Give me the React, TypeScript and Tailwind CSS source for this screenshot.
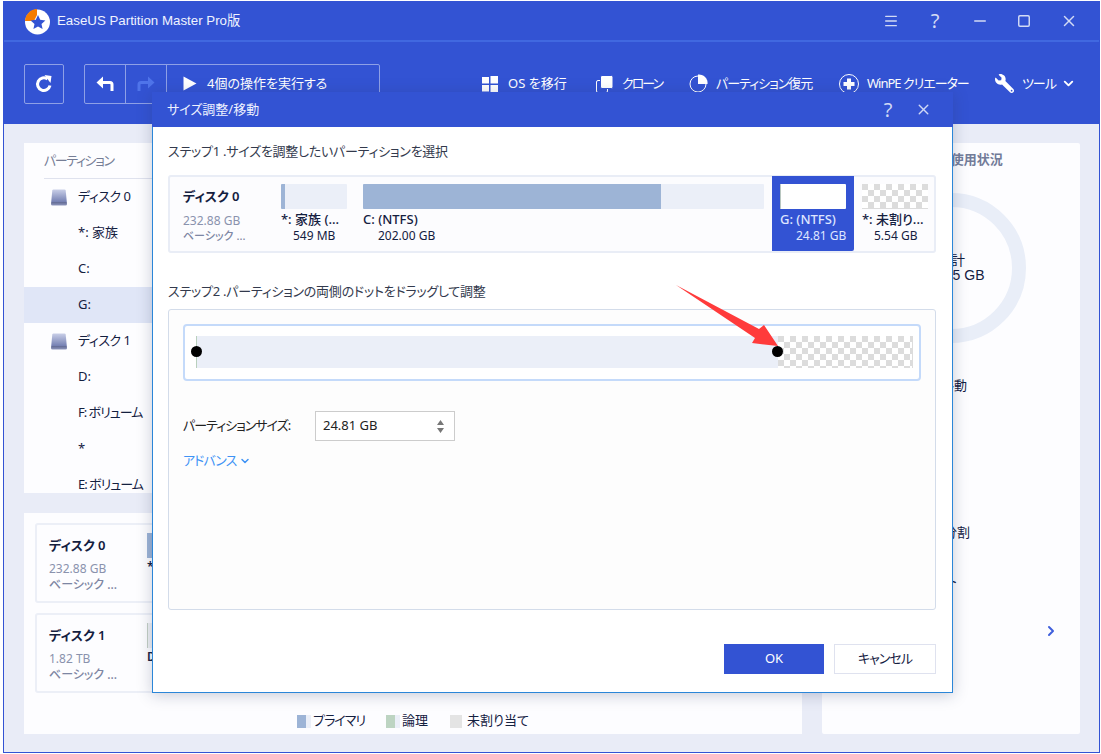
import { FaWrench } from "react-icons/fa";
import { ChevronDown, ChevronRight, Menu, Minus, Square, X } from "lucide-react";

const checks =
  "bg-[repeating-conic-gradient(#dcdcdc_0%_25%,#ffffff_0%_50%)] bg-[length:12px_12px] bg-[position:6px_0]";

const treeRows = [
  { label: "ディスク 0", disk: true, text: "tracking-[-0.5px]" },
  { label: "*: 家族", text: "" },
  { label: "C:", text: "" },
  { label: "G:", active: true, text: "" },
  { label: "ディスク 1", disk: true, text: "tracking-[-0.5px]" },
  { label: "D:", text: "" },
  { label: "F: ボリューム", text: "tracking-[-1px]" },
  { label: "*", text: "" },
  { label: "E: ボリューム", text: "tracking-[-1px]" },
];

const Logo = () => (
  <svg width="27" height="27" viewBox="0 0 27 27">
    <circle cx="13.5" cy="14" r="12.5" fill="#fff" />
    <path d="M1 13 A12.5 12.5 0 0 1 13 1 L13 7 L10 13 Z" fill="#f57c00" />
    <path
      d="M14 7l2.2 4.8 5.2.6-3.9 3.5 1.1 5.1-4.6-2.6-4.6 2.6 1.1-5.1-3.9-3.5 5.2-.6z"
      fill="#3353d3"
    />
  </svg>
);

const DiskIcon = () => (
  <svg width="16" height="17" viewBox="0 0 16 17">
    <defs>
      <linearGradient id="disk" x1="0" y1="0" x2="0" y2="1">
        <stop offset="0" stopColor="#c9cfe8" />
        <stop offset="0.75" stopColor="#7782b4" />
        <stop offset="0.76" stopColor="#5b648f" />
        <stop offset="1" stopColor="#8f97bd" />
      </linearGradient>
    </defs>
    <path
      d="M2.5 0.5h11q1 0 1.2 1L16 15q0 1.5-1.5 1.5h-13Q0 16.500 0 15L1.300 1.500q.2-1 1.200-1z"
      fill="url(#disk)"
    />
  </svg>
);

const ToolItem = ({
  icon,
  label,
  className,
  labelClass = "",
}: {
  icon: any;
  label: string;
  className: string;
  labelClass?: string;
}) => (
  <div className={`flex items-center shrink-0 ${className}`}>
    {icon}
    <span className={`text-[13px] text-white whitespace-nowrap ${labelClass}`}>{label}</span>
  </div>
);

const PartBar = ({
  fill,
  used,
  selected,
}: {
  fill?: string;
  used: string;
  selected?: boolean;
}) => (
  <div className={`h-[25px] flex rounded-[1px] overflow-hidden ${selected ? "bg-white" : "bg-[#ebeff8]"}`}>
    <div className={`${used} ${fill ?? "bg-[#9db4d6]"} h-full`} />
  </div>
);

const App = () => {
  return (
    <div className="relative w-[1101px] h-[754px] bg-white pl-[3px] pt-px pr-px pb-px overflow-hidden font-['Noto_Sans','Noto_Sans_CJK_JP',sans-serif] [font-feature-settings:'palt'] text-[#14203f]">
      <div className="flex flex-col h-[752px] border border-[#3353d3] bg-[#e9ecf7]">
        {/* title bar */}
        <div className="flex items-center h-[40px] shrink-0 bg-[#3353d3] border-b-2 border-[#4168e0] pl-[20px] text-white">
          <Logo />
          <span className="ml-[6px] text-[13.3px] font-['Liberation_Sans','Noto_Sans_CJK_JP',sans-serif] text-[#f0f3ff]">
            EaseUS Partition Master Pro版
          </span>
          <div className="ml-auto flex items-center text-[#d3dbf5]">
            <div className="w-[44px] flex justify-center">
              <Menu size={16} strokeWidth={2} />
            </div>
            <div className="w-[44px] flex justify-center text-[20px] leading-none">?</div>
            <div className="w-[45px] flex justify-center">
              <Minus size={18} strokeWidth={2} />
            </div>
            <div className="w-[44px] flex justify-center">
              <Square size={14} strokeWidth={2.5} />
            </div>
            <div className="w-[45px] flex justify-center mr-[8px]">
              <X size={18} strokeWidth={2} />
            </div>
          </div>
        </div>

        {/* toolbar */}
        <div className="flex items-center h-[82px] shrink-0 bg-[#3353d3] pl-[20px] pt-px">
          <div className="w-[40px] h-[40px] shrink-0 rounded-[2px] border border-[#8ea0e6] flex items-center justify-center">
            <svg width="20" height="20" viewBox="0 0 20 20" fill="none">
              <path d="M16 11.500A6.300 6.300 0 1 1 13.500 5" stroke="#fff" strokeWidth="3" />
              <path d="M10.500 1l7 1-1 7z" fill="#fff" />
            </svg>
          </div>
          <div className="ml-[20px] w-[296px] h-[40px] shrink-0 rounded-[2px] border border-[#8ea0e6] flex items-center">
            <div className="w-[41px] h-full border-r border-[#8ea0e6] flex items-center justify-center">
              <svg width="18" height="18" viewBox="0 0 18 18" fill="none">
                <path d="M16 16V9.500Q16 7.500 14 7.500H5" stroke="#fff" strokeWidth="3" />
                <path d="M7 1.500L0.500 7.500 7 13.500z" fill="#fff" />
              </svg>
            </div>
            <div className="w-[41px] h-full border-r border-[#8ea0e6] flex items-center justify-center">
              <svg width="18" height="18" viewBox="0 0 18 18" fill="none">
                <path d="M2 16V9.500Q2 7.500 4 7.500H13" stroke="#4f74ea" strokeWidth="3" />
                <path d="M11 1.500L17.500 7.500 11 13.500z" fill="#4f74ea" />
              </svg>
            </div>
            <svg className="ml-[16px]" width="14" height="15" viewBox="0 0 14 15">
              <path d="M0.500 0.500L13.500 7.500 0.500 14.500z" fill="#fff" />
            </svg>
            <span className="ml-[10px] text-[13px] text-white whitespace-nowrap">4個の操作を実行する</span>
          </div>

          <ToolItem
            className="ml-[102px] w-[114px]"
            label="OS を移行"
            icon={
              <svg className="mr-[10px]" width="16" height="16" viewBox="0 0 16 16" fill="#fff">
                <path d="M0 1h7v6.500H0zM8.500 0H16v7.500H8.500zM0 9h7v6.500H0zM8.500 9H16v7H8.500z" />
              </svg>
            }
          />
          <ToolItem
            className="w-[93px]"
            label="クローン"
            labelClass="tracking-[-2px]"
            icon={
              <svg className="mr-[9px]" width="17" height="18" viewBox="0 0 17 18" fill="none">
                <rect x="0.500" y="5.500" width="11" height="12" rx="1.500" stroke="#fff" />
                <rect x="4.500" y="0.500" width="12.500" height="13" rx="1.500" fill="#fff" stroke="#3353d3" />
              </svg>
            }
          />
          <ToolItem
            className="w-[150px]"
            label="パーティション復元"
            labelClass="tracking-[-1px]"
            icon={
              <svg className="mr-[8px]" width="19" height="19" viewBox="0 0 19 19" fill="none">
                <circle cx="9" cy="10" r="8" stroke="#fff" />
                <path d="M9 0.500A8.500 8.500 0 0 1 18.500 10H9z" fill="#fff" />
              </svg>
            }
          />
          <ToolItem
            className="w-[156px]"
            label="WinPE クリエーター"
            labelClass="tracking-[-1px]"
            icon={
              <svg className="mr-[8px]" width="20" height="20" viewBox="0 0 20 20" fill="none">
                <circle cx="10" cy="10" r="9.500" stroke="#fff" />
                <path d="M8 4.500h4V8h3.500v4H12v3.500H8V12H4.500V8H8z" fill="#fff" />
              </svg>
            }
          />
          <ToolItem
            className=""
            label="ツール"
            labelClass="tracking-[-1px]"
            icon={<FaWrench className="mr-[8px] text-white -scale-x-100" size={19} />}
          />
          <ChevronDown className="ml-[5px] text-white" size={15} strokeWidth={3} />
        </div>

        {/* main area behind the dialog */}
        <div className="flex flex-1 gap-[20px] pt-[19px] pl-[20px] pr-[19px] pb-[18px] min-h-0">
          <div className="w-[778px] flex flex-col gap-[20px]">
            <div className="h-[350px] bg-[#fdfdff] overflow-hidden pl-[20px]">
              <div className="h-[36px] flex items-center text-[13px] tracking-[-1.4px] text-[#767e96] border-b border-[#dfe2ee]">
                パーティション
              </div>
              <div className="-ml-[20px]">
                {treeRows.map((row) => (
                  <div
                    key={row.label}
                    className={`h-[36px] flex items-center text-[13px] ${row.active ? "bg-[#e0e6f7]" : ""}`}
                  >
                    <div className="w-[27px] ml-[27px] shrink-0">{row.disk && <DiskIcon />}</div>
                    <span className={row.text}>{row.label}</span>
                  </div>
                ))}
              </div>
            </div>

            <div className="flex-1 bg-[#fdfdff] pt-[10px] pl-[11px] pr-[11px] flex flex-col">
              <div className="h-[80px] border-2 border-[#eceff7] rounded-[3px] pl-[12px] flex">
                <div className="w-[98px] pt-[10px]">
                  <div className="text-[13px] font-semibold leading-[20px]">ディスク 0</div>
                  <div className="mt-[6px] text-[12px] leading-[16px] text-[#8a92ad]">232.88 GB</div>
                  <div className="text-[12px] leading-[16px] font-medium text-[#7d86a3]">ベーシック ...</div>
                </div>
                <div className="pt-[8px]">
                  <div className="w-[66px] h-[25px] bg-[#9db4d6]" />
                  <div className="text-[12px] font-semibold">*</div>
                </div>
              </div>
              <div className="mt-[10px] h-[80px] border-2 border-[#eceff7] rounded-[3px] pl-[12px] flex">
                <div className="w-[98px] pt-[10px]">
                  <div className="text-[13px] font-semibold leading-[20px]">ディスク 1</div>
                  <div className="mt-[6px] text-[12px] leading-[16px] text-[#8a92ad]">1.82 TB</div>
                  <div className="text-[12px] leading-[16px] font-medium text-[#7d86a3]">ベーシック ...</div>
                </div>
                <div className="pt-[8px]">
                  <div className="w-[66px] h-[25px] bg-[#eef0f3] border-l border-[#c3cfc3]" />
                  <div className="text-[12px] font-semibold">D</div>
                </div>
              </div>
              <div className="mt-auto h-[40px] -mb-[7px] flex items-center justify-center text-[13px] text-[#14203f]">
                <span className="w-[9px] h-[13px] bg-[#9db4d6]" />
                <span className="w-[5px] h-[13px] bg-[#ebeff8]" />
                <span className="ml-[2px] tracking-[-1px]">プライマリ</span>
                <span className="ml-[21px] w-[9px] h-[13px] bg-[#bdd4c2]" />
                <span className="w-[5px] h-[13px] bg-[#ebeff8]" />
                <span className="ml-[2px]">論理</span>
                <span className="ml-[22px] w-[12px] h-[13px] bg-[#e4e4e4]" />
                <span className="ml-[5px]">未割り当て</span>
              </div>
            </div>
          </div>

          <div className="w-[258px] bg-[#fdfdff] rounded-[2px] overflow-hidden">
            <div className="h-[34px] flex items-center pl-[83px] text-[13px] font-semibold text-[#737c99]">
              ディスク使用状況
            </div>
            <div className="relative mt-[16px] ml-[54px] w-[150px] h-[150px] rounded-full border-[14px] border-[#e9eef8] flex flex-col items-center justify-center text-[#14203f] font-['Liberation_Sans','Noto_Sans_CJK_JP',sans-serif] leading-[15px] text-[14px]">
              <span>合計</span>
              <span>232.85 GB</span>
            </div>
            <div className="mt-[18px] text-[13px]">
              <div className="h-[49px] flex items-center justify-end pr-[113px]">サイズ調整/移動</div>
              <div className="h-[49px] flex items-center pl-[41px]">クローン</div>
              <div className="h-[49px] flex items-center pl-[41px]">削除</div>
              <div className="h-[49px] flex items-center justify-end pr-[110px]">パーティション分割</div>
              <div className="h-[49px] flex items-center justify-end pr-[123px]">フォーマット</div>
              <div className="h-[49px] flex items-center justify-end pr-[21px]">
                <ChevronRight className="text-[#3f5fdc]" size={16} strokeWidth={3} />
              </div>
            </div>
          </div>
        </div>
      </div>

      {/* resize dialog */}
      <div className="absolute left-[152px] top-[92px] w-[801px] h-[601px] flex flex-col bg-white border border-[#2b86d8] border-t-0 shadow-[0_2px_14px_rgba(40,50,90,0.25)]">
        <div className="h-[35px] shrink-0 flex items-center bg-[#3353d3] pl-[15px] -mx-px">
          <span className="text-[13px] text-[#eef1ff]">サイズ調整/移動</span>
          <div className="ml-auto flex items-center text-[#cfd8f5]">
            <span className="w-[34px] text-center text-[20px] leading-none">?</span>
            <X className="ml-[10px] mr-[21px]" size={17} strokeWidth={2} />
          </div>
        </div>

        <div className="flex flex-col flex-1 pl-[15px]">
          <div className="mt-[14px] text-[13px] leading-[20px] tracking-[-0.25px] text-[#333a4d]">
            ステップ1 .サイズを調整したいパーティションを選択
          </div>

          <div className="mt-[14px] w-[768px] h-[78px] flex border-2 border-[#e9edf6] rounded-[3px] bg-[#fcfcfe] pl-[13px]">
            <div className="w-[90px] shrink-0 pt-[9px]">
              <div className="text-[13px] leading-[20px] font-semibold">ディスク 0</div>
              <div className="mt-[8px] text-[12px] leading-[14px] text-[#8a92ad]">232.88 GB</div>
              <div className="text-[11px] leading-[15px] font-medium text-[#7d86a3]">ベーシック ...</div>
            </div>
            <div className="w-[82px] shrink-0 px-2 pt-[7px]">
              <PartBar used="w-[4px]" />
              <div className="mt-px text-[13px] leading-[18px] font-medium whitespace-nowrap">*: 家族 (...</div>
              <div className="text-[12px] leading-[16px] pl-[12px] whitespace-nowrap">549 MB</div>
            </div>
            <div className="w-[417px] shrink-0 px-2 pt-[7px]">
              <PartBar used="w-[298px]" />
              <div className="mt-px text-[13px] leading-[18px] font-medium whitespace-nowrap">C: (NTFS)</div>
              <div className="text-[12px] leading-[16px] pl-[15px] whitespace-nowrap">202.00 GB</div>
            </div>
            <div className="w-[82px] shrink-0 -mt-px h-[75px] px-2 pt-[8px] bg-[#3353d3] rounded-br-[2px] text-white">
              <PartBar used="w-px" fill="bg-[#b8c6c0]" selected />
              <div className="mt-px text-[13px] leading-[18px] font-medium whitespace-nowrap text-[#dfe6ff]">G: (NTFS)</div>
              <div className="text-[12px] leading-[16px] pl-[16px] whitespace-nowrap text-[#dfe6ff]">24.81 GB</div>
            </div>
            <div className="w-[80px] shrink-0 pl-2 pr-[6px] pt-[7px]">
              <div className={`h-[25px] border-b border-[#dcdcdc] ${checks}`} />
              <div className="mt-px text-[13px] leading-[18px] font-medium whitespace-nowrap">*: 未割り...</div>
              <div className="text-[12px] leading-[16px] pl-[12px] whitespace-nowrap">5.54 GB</div>
            </div>
          </div>

          <div className="mt-[28px] text-[13px] leading-[20px] tracking-[-0.25px] text-[#333a4d]">
            ステップ2 .パーティションの両側のドットをドラッグして調整
          </div>

          <div className="relative mt-[8px] w-[768px] h-[301px] border border-[#d3dcea] rounded-[3px] bg-[#fdfdfd] pt-[14px] pl-[14px]">
            <div className="relative w-[738px] h-[57px] bg-white border-2 border-[#c4dafa] rounded-[4px] pt-[10px] pl-[11px]">
              <div className="flex w-[717px] h-[32px]">
                <div className="w-[582px] bg-[#ebeff8] border-l border-[#b9d0bd]" />
                <div className={`flex-1 border-r border-[#dcdcdc] ${checks}`} />
              </div>
              <div className="absolute left-[6px] top-[20px] w-[11px] h-[11px] rounded-full bg-black" />
              <div className="absolute left-[587px] top-[20px] w-[11px] h-[11px] rounded-full bg-black" />
            </div>

            <div className="mt-[30px] flex items-center">
              <span className="w-[132px] shrink-0 text-[13px] tracking-[-1px] text-[#222] whitespace-nowrap">パーティションサイズ:</span>
              <div className="w-[140px] h-[30px] border border-[#cccccc] flex items-center pl-[7px] pr-[10px] text-[13px] text-[#222] bg-white">
                <span>24.81 GB</span>
                <svg className="ml-auto" width="7" height="13" viewBox="0 0 7 13" fill="#777">
                  <path d="M3.500 0L7 5H0zM0 8h7l-3.500 5z" />
                </svg>
              </div>
            </div>

            <div className="mt-[10px] flex items-center text-[13px] tracking-[-1px] text-[#3f93f5]">
              アドバンス
              <ChevronDown className="ml-[3px]" size={12} strokeWidth={3} />
            </div>
          </div>

          <div className="mt-[34px] w-[768px] flex justify-end gap-[10px]">
            <button className="w-[100px] h-[30px] bg-[#3353d3] text-[13px] text-white">OK</button>
            <button className="w-[102px] h-[30px] border border-[#dfe2ef] bg-white text-[13px] tracking-[-1px] text-[#14203f]">
              キャンセル
            </button>
          </div>
        </div>
      </div>

      {/* red annotation arrow */}
      <svg className="absolute left-[670px] top-[280px]" width="115" height="72" viewBox="0 0 115 72">
        <polygon points="6,5 89,49 94,45 108,66 82,63 85,58" fill="#ff3b3b" />
      </svg>
    </div>
  );
};

export default App;
